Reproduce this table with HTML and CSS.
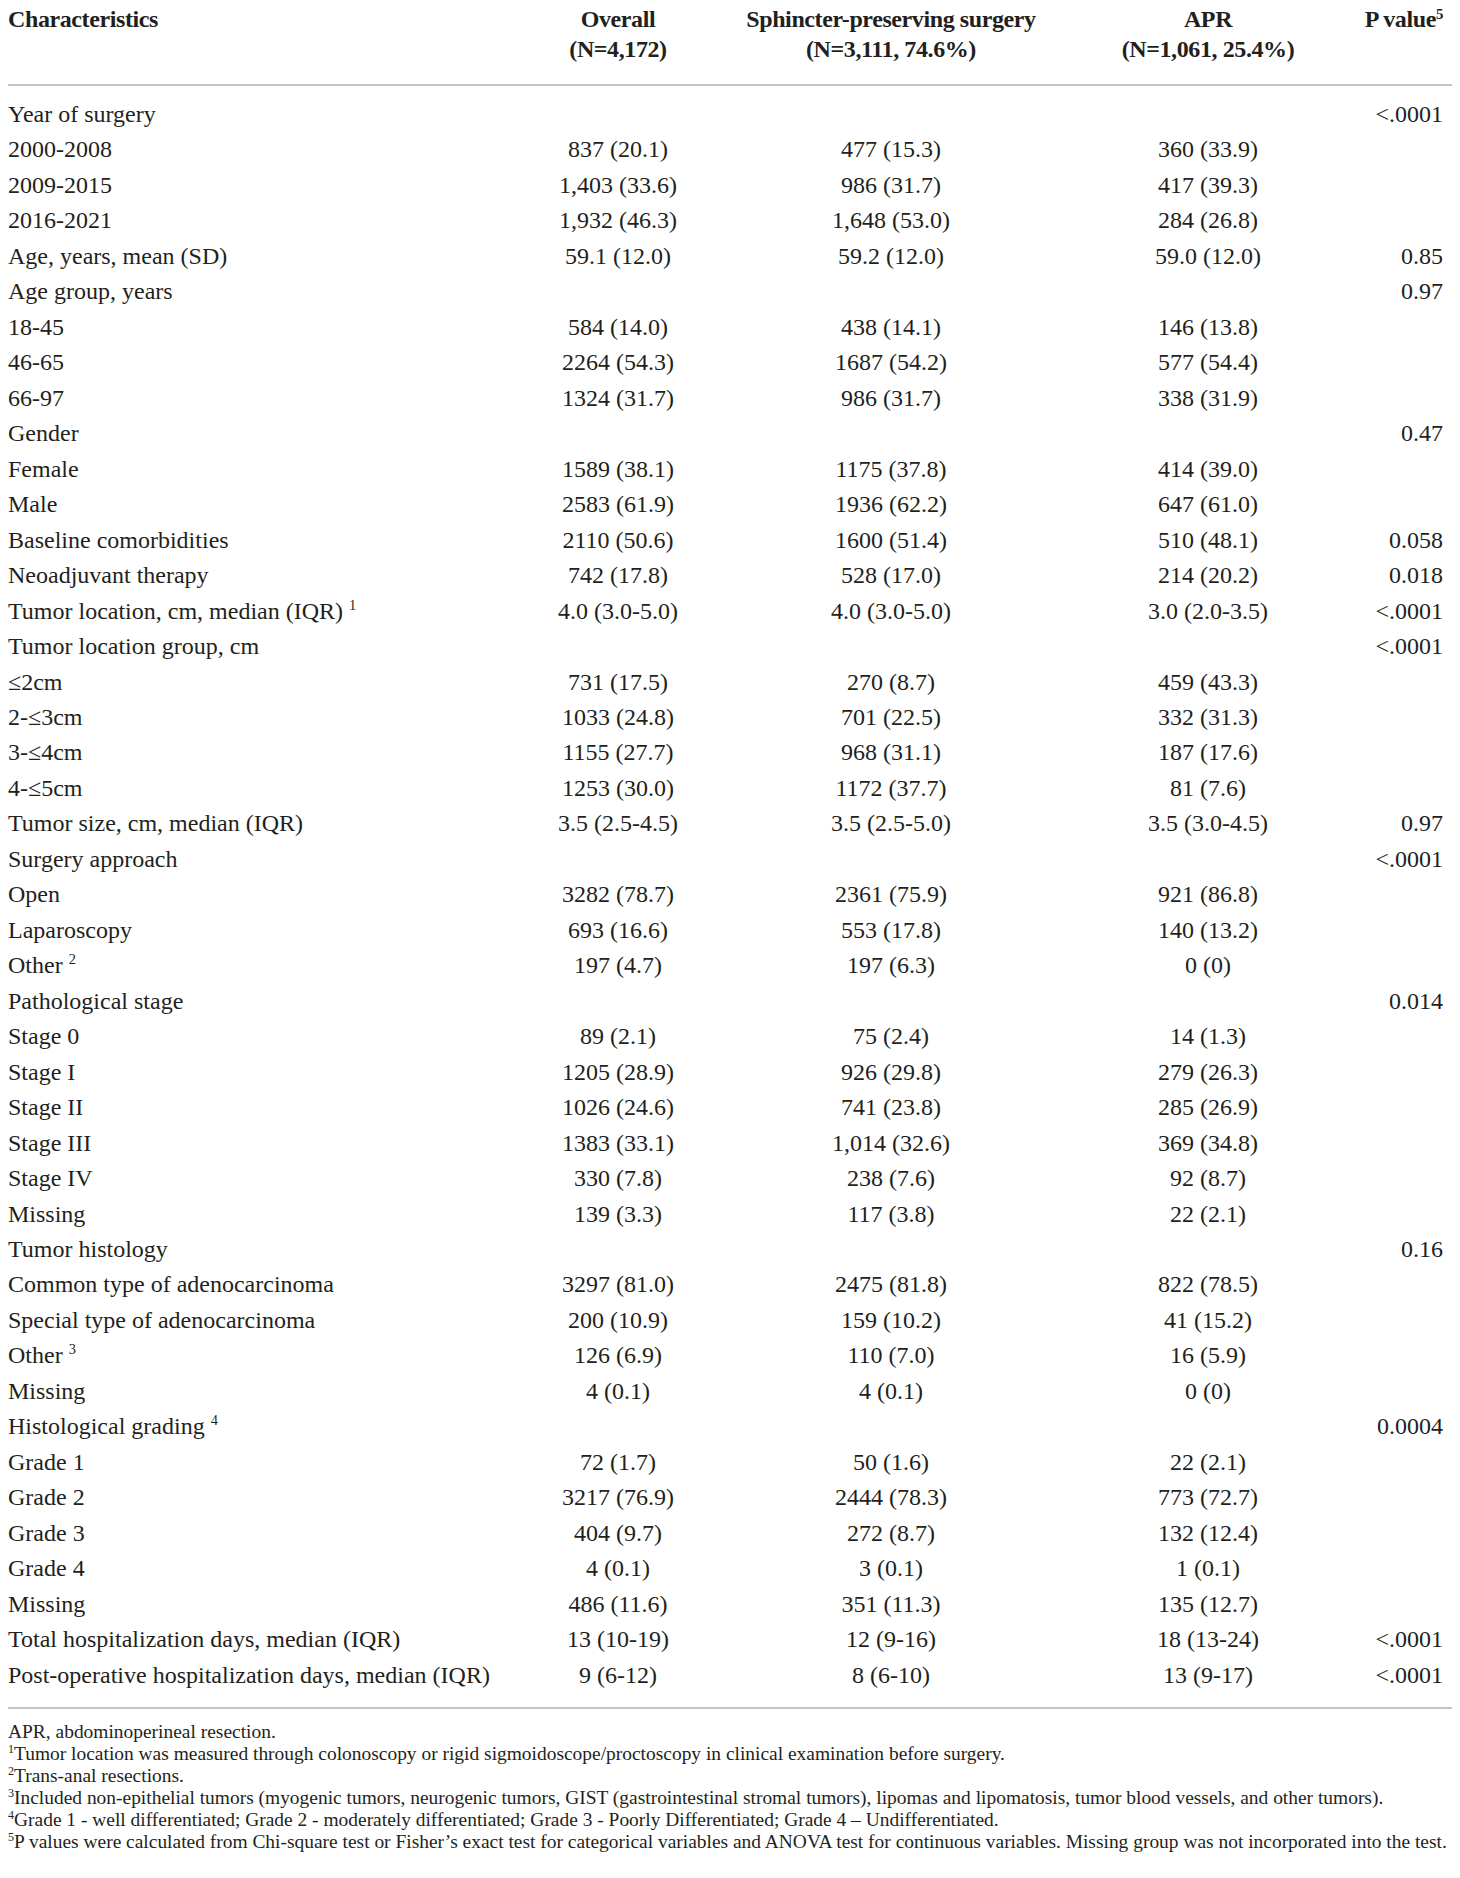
FILE: index.html
```html
<!DOCTYPE html>
<html lang="en">
<head>
  <meta charset="UTF-8" />
  <meta name="viewport" content="width=device-width, initial-scale=1.0"/>
  <title>Table 1 - Patient characteristics</title>
  <link rel="stylesheet" href="styles.css">
</head>
<body>
  <div id="tableWrap">
    <table class="stats">
      <colgroup>
        <col class="c-label">
        <col class="c-overall">
        <col class="c-sps">
        <col class="c-apr">
        <col class="c-p">
      </colgroup>
      <thead>
        <tr>
          <th class="label">Characteristics</th>
          <th>Overall<br>(N=4,172)</th>
          <th>Sphincter-preserving surgery<br>(N=3,111, 74.6%)</th>
          <th>APR<br>(N=1,061, 25.4%)</th>
          <th class="pval">P value<sup>5</sup></th>
        </tr>
      </thead>
      <tbody>
        <tr><td class="label">Year of surgery</td><td></td><td></td><td></td><td class="pval">&lt;.0001</td></tr>
        <tr><td class="label">2000-2008</td><td>837 (20.1)</td><td>477 (15.3)</td><td>360 (33.9)</td><td class="pval"></td></tr>
        <tr><td class="label">2009-2015</td><td>1,403 (33.6)</td><td>986 (31.7)</td><td>417 (39.3)</td><td class="pval"></td></tr>
        <tr><td class="label">2016-2021</td><td>1,932 (46.3)</td><td>1,648 (53.0)</td><td>284 (26.8)</td><td class="pval"></td></tr>
        <tr><td class="label">Age, years, mean (SD)</td><td>59.1 (12.0)</td><td>59.2 (12.0)</td><td>59.0 (12.0)</td><td class="pval">0.85</td></tr>
        <tr><td class="label">Age group, years</td><td></td><td></td><td></td><td class="pval">0.97</td></tr>
        <tr><td class="label">18-45</td><td>584 (14.0)</td><td>438 (14.1)</td><td>146 (13.8)</td><td class="pval"></td></tr>
        <tr><td class="label">46-65</td><td>2264 (54.3)</td><td>1687 (54.2)</td><td>577 (54.4)</td><td class="pval"></td></tr>
        <tr><td class="label">66-97</td><td>1324 (31.7)</td><td>986 (31.7)</td><td>338 (31.9)</td><td class="pval"></td></tr>
        <tr><td class="label">Gender</td><td></td><td></td><td></td><td class="pval">0.47</td></tr>
        <tr><td class="label">Female</td><td>1589 (38.1)</td><td>1175 (37.8)</td><td>414 (39.0)</td><td class="pval"></td></tr>
        <tr><td class="label">Male</td><td>2583 (61.9)</td><td>1936 (62.2)</td><td>647 (61.0)</td><td class="pval"></td></tr>
        <tr><td class="label">Baseline comorbidities</td><td>2110 (50.6)</td><td>1600 (51.4)</td><td>510 (48.1)</td><td class="pval">0.058</td></tr>
        <tr><td class="label">Neoadjuvant therapy</td><td>742 (17.8)</td><td>528 (17.0)</td><td>214 (20.2)</td><td class="pval">0.018</td></tr>
        <tr><td class="label">Tumor location, cm, median (IQR) <sup>1</sup></td><td>4.0 (3.0-5.0)</td><td>4.0 (3.0-5.0)</td><td>3.0 (2.0-3.5)</td><td class="pval">&lt;.0001</td></tr>
        <tr><td class="label">Tumor location group, cm</td><td></td><td></td><td></td><td class="pval">&lt;.0001</td></tr>
        <tr><td class="label">&le;2cm</td><td>731 (17.5)</td><td>270 (8.7)</td><td>459 (43.3)</td><td class="pval"></td></tr>
        <tr><td class="label">2-&le;3cm</td><td>1033 (24.8)</td><td>701 (22.5)</td><td>332 (31.3)</td><td class="pval"></td></tr>
        <tr><td class="label">3-&le;4cm</td><td>1155 (27.7)</td><td>968 (31.1)</td><td>187 (17.6)</td><td class="pval"></td></tr>
        <tr><td class="label">4-&le;5cm</td><td>1253 (30.0)</td><td>1172 (37.7)</td><td>81 (7.6)</td><td class="pval"></td></tr>
        <tr><td class="label">Tumor size, cm, median (IQR)</td><td>3.5 (2.5-4.5)</td><td>3.5 (2.5-5.0)</td><td>3.5 (3.0-4.5)</td><td class="pval">0.97</td></tr>
        <tr><td class="label">Surgery approach</td><td></td><td></td><td></td><td class="pval">&lt;.0001</td></tr>
        <tr><td class="label">Open</td><td>3282 (78.7)</td><td>2361 (75.9)</td><td>921 (86.8)</td><td class="pval"></td></tr>
        <tr><td class="label">Laparoscopy</td><td>693 (16.6)</td><td>553 (17.8)</td><td>140 (13.2)</td><td class="pval"></td></tr>
        <tr><td class="label">Other <sup>2</sup></td><td>197 (4.7)</td><td>197 (6.3)</td><td>0 (0)</td><td class="pval"></td></tr>
        <tr><td class="label">Pathological stage</td><td></td><td></td><td></td><td class="pval">0.014</td></tr>
        <tr><td class="label">Stage 0</td><td>89 (2.1)</td><td>75 (2.4)</td><td>14 (1.3)</td><td class="pval"></td></tr>
        <tr><td class="label">Stage I</td><td>1205 (28.9)</td><td>926 (29.8)</td><td>279 (26.3)</td><td class="pval"></td></tr>
        <tr><td class="label">Stage II</td><td>1026 (24.6)</td><td>741 (23.8)</td><td>285 (26.9)</td><td class="pval"></td></tr>
        <tr><td class="label">Stage III</td><td>1383 (33.1)</td><td>1,014 (32.6)</td><td>369 (34.8)</td><td class="pval"></td></tr>
        <tr><td class="label">Stage IV</td><td>330 (7.8)</td><td>238 (7.6)</td><td>92 (8.7)</td><td class="pval"></td></tr>
        <tr><td class="label">Missing</td><td>139 (3.3)</td><td>117 (3.8)</td><td>22 (2.1)</td><td class="pval"></td></tr>
        <tr><td class="label">Tumor histology</td><td></td><td></td><td></td><td class="pval">0.16</td></tr>
        <tr><td class="label">Common type of adenocarcinoma</td><td>3297 (81.0)</td><td>2475 (81.8)</td><td>822 (78.5)</td><td class="pval"></td></tr>
        <tr><td class="label">Special type of adenocarcinoma</td><td>200 (10.9)</td><td>159 (10.2)</td><td>41 (15.2)</td><td class="pval"></td></tr>
        <tr><td class="label">Other <sup>3</sup></td><td>126 (6.9)</td><td>110 (7.0)</td><td>16 (5.9)</td><td class="pval"></td></tr>
        <tr><td class="label">Missing</td><td>4 (0.1)</td><td>4 (0.1)</td><td>0 (0)</td><td class="pval"></td></tr>
        <tr><td class="label">Histological grading <sup>4</sup></td><td></td><td></td><td></td><td class="pval">0.0004</td></tr>
        <tr><td class="label">Grade 1</td><td>72 (1.7)</td><td>50 (1.6)</td><td>22 (2.1)</td><td class="pval"></td></tr>
        <tr><td class="label">Grade 2</td><td>3217 (76.9)</td><td>2444 (78.3)</td><td>773 (72.7)</td><td class="pval"></td></tr>
        <tr><td class="label">Grade 3</td><td>404 (9.7)</td><td>272 (8.7)</td><td>132 (12.4)</td><td class="pval"></td></tr>
        <tr><td class="label">Grade 4</td><td>4 (0.1)</td><td>3 (0.1)</td><td>1 (0.1)</td><td class="pval"></td></tr>
        <tr><td class="label">Missing</td><td>486 (11.6)</td><td>351 (11.3)</td><td>135 (12.7)</td><td class="pval"></td></tr>
        <tr><td class="label">Total hospitalization days, median (IQR)</td><td>13 (10-19)</td><td>12 (9-16)</td><td>18 (13-24)</td><td class="pval">&lt;.0001</td></tr>
        <tr><td class="label">Post-operative hospitalization days, median (IQR)</td><td>9 (6-12)</td><td>8 (6-10)</td><td>13 (9-17)</td><td class="pval">&lt;.0001</td></tr>
      </tbody>
    </table>

    <div class="notes">
      <p>APR, abdominoperineal resection.</p>
      <p><sup>1</sup>Tumor location was measured through colonoscopy or rigid sigmoidoscope/proctoscopy in clinical examination before surgery.</p>
      <p><sup>2</sup>Trans-anal resections.</p>
      <p><sup>3</sup>Included non-epithelial tumors (myogenic tumors, neurogenic tumors, GIST (gastrointestinal stromal tumors), lipomas and lipomatosis, tumor blood vessels, and other tumors).</p>
      <p><sup>4</sup>Grade 1 - well differentiated; Grade 2 - moderately differentiated; Grade 3 - Poorly Differentiated; Grade 4 &ndash; Undifferentiated.</p>
      <p><sup>5</sup>P values were calculated from Chi-square test or Fisher&rsquo;s exact test for categorical variables and ANOVA test for continuous variables. Missing group was not incorporated into the test.</p>
    </div>
  </div>
</body>
</html>
```

FILE: styles.css
```css
body {
  margin: 0; padding: 0; background: #fff; color: #231f20;
  font-family: "Liberation Serif", "Times New Roman", serif;
}
#tableWrap { padding: 4px 8px 0 8px; }

table.stats {
  width: 1444px; border-collapse: collapse; table-layout: fixed;
  font-size: 24px;
}
.c-label { width: 512px; }
.c-overall { width: 196px; }
.c-sps { width: 350px; }
.c-apr { width: 284px; }
.c-p { width: 102px; }

th, td { padding: 0; text-align: center; white-space: nowrap; }
th {
  font-weight: bold; line-height: 30px; vertical-align: top;
  letter-spacing: -0.4px;
  padding-bottom: 20px; border-bottom: 2px solid #c4c4c4;
}
td { line-height: 35.47px; }
.label { text-align: left; }
.pval { text-align: right; padding-right: 9px; }

tbody tr:first-child td { padding-top: 11px; }
tbody tr:last-child td { padding-bottom: 14px; border-bottom: 2px solid #c4c4c4; }

sup { font-size: 0.6em; line-height: 0; vertical-align: 0.6em; }
th sup { font-size: 0.62em; vertical-align: 0.55em; }

.notes { margin-top: 12px; font-size: 19.45px; line-height: 22px; }
.notes p { margin: 0; white-space: nowrap; }
.notes sup { font-size: 0.62em; vertical-align: 0.55em; }
```
